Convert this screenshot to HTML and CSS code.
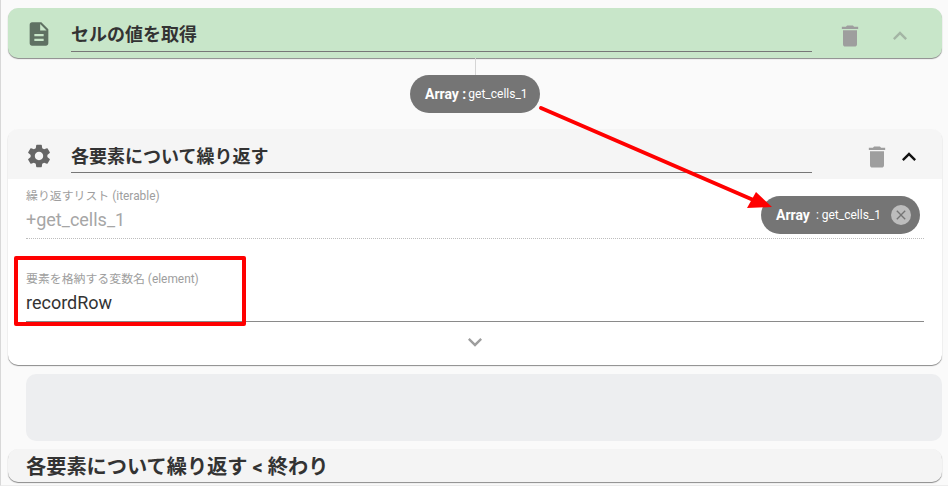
FILE: index.html
```html
<!DOCTYPE html>
<html lang="ja">
<head>
    <meta charset="UTF-8">
    <title>各要素について繰り返す</title>
    <link rel="stylesheet" href="styles.css">
</head>
<body>
    <div class="flow">
        <!-- Get cell value block -->
        <section class="block block-green">
            <div class="block-head">
                <svg class="head-icon" viewBox="0 0 24 24"><path d="M14 2H6c-1.1 0-2 .9-2 2v16c0 1.1.9 2 2 2h12c1.1 0 2-.9 2-2V8l-6-6zm2 16H8v-2h8v2zm0-4H8v-2h8v2zm-3-5V3.5L18.5 9H13z"/></svg>
                <div class="head-title">セルの値を取得</div>
                <svg class="trash" viewBox="0 0 24 24"><path d="M6 19c0 1.1.9 2 2 2h8c1.100 0 2-.9 2-2V7H6v12zM19 4h-3.500l-1-1h-5l-1 1H5v2h14V4z"/></svg>
                <svg class="chevron faded" viewBox="0 0 24 24"><path d="M7.410 15.410 12 10.830l4.590 4.580L18 14l-6-6-6 6z"/></svg>
            </div>
        </section>

        <!-- Output variable chip -->
        <div class="connector">
            <div class="chip chip-out"><b>Array :</b><span>get_cells_1</span></div>
        </div>

        <!-- For each block -->
        <section class="block block-loop">
            <div class="block-head">
                <svg class="head-icon" viewBox="0 0 24 24"><path d="M19.140 12.940c.04-.3.06-.61.06-.94 0-.32-.02-.64-.07-.94l2.030-1.580c.18-.14.23-.41.12-.61l-1.920-3.320c-.12-.22-.37-.29-.59-.22l-2.390.96c-.5-.38-1.030-.7-1.620-.94l-.36-2.540c-.04-.24-.24-.41-.48-.41h-3.840c-.24 0-.43.17-.47.41l-.36 2.540c-.59.24-1.130.57-1.620.94l-2.390-.96c-.22-.08-.47 0-.59.22L2.740 8.870c-.12.21-.08.47.12.61l2.030 1.580c-.05.3-.09.63-.09.94s.02.64.07.94l-2.030 1.580c-.18.14-.23.41-.12.61l1.920 3.320c.12.22.37.29.59.22l2.390-.96c.5.38 1.030.7 1.620.94l.36 2.540c.05.24.24.41.48.41h3.840c.24 0 .44-.17.47-.41l.36-2.540c.59-.24 1.130-.56 1.620-.94l2.390.96c.22.08.47 0 .59-.22l1.920-3.320c.12-.22.07-.47-.12-.61l-2.010-1.580zM12 15.600c-1.980 0-3.600-1.620-3.600-3.600s1.620-3.600 3.600-3.600 3.600 1.620 3.600 3.600-1.620 3.600-3.600 3.600z"/></svg>
                <div class="head-title">各要素について繰り返す</div>
                <svg class="trash" viewBox="0 0 24 24"><path d="M6 19c0 1.100.9 2 2 2h8c1.100 0 2-.9 2-2V7H6v12zM19 4h-3.500l-1-1h-5l-1 1H5v2h14V4z"/></svg>
                <svg class="chevron" viewBox="0 0 24 24"><path d="M7.410 15.410 12 10.830l4.590 4.580L18 14l-6-6-6 6z"/></svg>
            </div>
            <div class="block-body">
                <div class="field field-dashed">
                    <label>繰り返すリスト (iterable)</label>
                    <div class="field-value muted">+get_cells_1</div>
                    <div class="chip chip-in">
                        <b>Array</b><span>: get_cells_1</span>
                        <i class="chip-close"><svg viewBox="0 0 24 24"><path d="M19 6.410 17.590 5 12 10.590 6.410 5 5 6.410 10.590 12 5 17.590 6.410 19 12 13.410 17.590 19 19 17.590 13.410 12z"/></svg></i>
                    </div>
                </div>
                <div class="field field-solid">
                    <label>要素を格納する変数名 (element)</label>
                    <div class="field-value">recordRow</div>
                </div>
                <div class="expand">
                    <svg viewBox="0 0 24 24"><path d="M7.410 8.590 12 13.170l4.590-4.580L18 10l-6 6-6-6z"/></svg>
                </div>
            </div>
        </section>

        <div class="drop-area"></div>

        <section class="block block-end">各要素について繰り返す &lt; 終わり</section>
    </div>

    <!-- Annotations drawn over the screenshot -->
    <div class="mark-box"></div>
    <svg class="mark-arrow" viewBox="0 0 948 486">
        <line x1="541" y1="108" x2="758" y2="202" stroke="#ff0000" stroke-width="4" stroke-linecap="round"/>
        <polygon points="756,192 772,207 747,208" fill="#ff0000"/>
    </svg>
</body>
</html>
```

FILE: styles.css
```css
html, body {
    margin: 0;
    padding: 0;
    height: 100%;
    overflow: hidden;
}

body {
    background: #fafafa;
    color: #333;
    font-family: Roboto, "Noto Sans CJK JP", sans-serif;
    border-left: 1px solid #d8d8d8;
    border-bottom: 1px solid #ececec;
    box-sizing: border-box;
}

.flow {
    display: flex;
    flex-direction: column;
    padding: 8px 6px 0 7px;
}

/* Blocks */
.block {
    border-radius: 10px;
    box-shadow: 0 1px 1px rgba(0, 0, 0, 0.45);
}

.block-head {
    display: flex;
    align-items: center;
    height: 50px;
    box-sizing: border-box;
    padding: 5px 0 0 17px;
}

.block-green {
    background: #c8e6c9;
}

.block-green .block-head {
    padding-right: 28px;
}

.block-loop {
    background: #fff;
}

.block-loop .block-head {
    padding-right: 19px;
    background: #f5f5f5;
    border-radius: 10px 10px 0 0;
}

.head-icon {
    width: 28px;
    height: 28px;
    margin-top: -4px;
    fill: #5f7163;
    flex: none;
}

.block-loop .head-icon {
    margin-top: -2px;
    fill: #666;
}

.head-title {
    flex: 1;
    align-self: flex-start;
    margin-left: 18px;
    height: 39px;
    box-sizing: border-box;
    line-height: 44px;
    font-size: 18px;
    font-weight: 700;
    color: #333;
    border-bottom: 1px solid #777;
}

.block-loop .head-title {
    line-height: 46px;
}

.trash {
    width: 28px;
    height: 28px;
    margin-left: 24px;
    fill: #9e9e9e;
    flex: none;
}

.block-loop .trash {
    margin-left: 51px;
}

.chevron {
    width: 28px;
    height: 28px;
    margin-left: 22px;
    fill: #111;
    flex: none;
}

.block-loop .chevron {
    margin-left: 4px;
}

.chevron.faded {
    fill: #a3b5a4;
}

/* Chips */
.connector {
    display: flex;
    justify-content: center;
    height: 71px;
    padding-top: 17px;
    box-sizing: border-box;
    position: relative;
}

.connector::before {
    content: "";
    position: absolute;
    top: 0;
    left: 467px;
    width: 1px;
    height: 17px;
    background: #d5d5d5;
}

.chip {
    display: flex;
    align-items: center;
    height: 38px;
    box-sizing: border-box;
    border-radius: 19px;
    background: #757575;
    color: #fff;
}

.chip b {
    font-size: 14px;
}

.chip span {
    font-size: 12px;
}

.chip-out {
    width: 130px;
    padding-left: 15px;
}

.chip-out b {
    margin-right: 2px;
}

.chip-in {
    position: absolute;
    top: 17px;
    right: 4px;
    width: 159px;
    padding-left: 15px;
}

.chip-in span {
    margin-left: 6px;
}

.chip-close {
    display: flex;
    align-items: center;
    justify-content: center;
    width: 20px;
    height: 20px;
    margin-left: 10px;
    border-radius: 50%;
    background: #bdbdbd;
}

.chip-close svg {
    width: 16px;
    height: 16px;
    fill: #757575;
}

/* Form fields */
.block-body {
    padding: 0 18px;
    border-radius: 0 0 10px 10px;
}

.field {
    position: relative;
    box-sizing: border-box;
}

.field label {
    display: block;
    font-size: 11.900px;
    line-height: 16px;
    color: #9e9e9e;
}

.field-value {
    font-size: 18px;
    line-height: 24px;
    color: #333;
    margin-top: 4px;
}

.field-value.muted {
    color: #a6a6a6;
}

.field-dashed {
    height: 60px;
    padding-top: 9px;
    border-bottom: 1px dotted #bdbdbd;
}

.field-solid {
    height: 83px;
    padding-top: 32px;
    border-bottom: 1px solid #8a8a8a;
}

.expand {
    display: flex;
    justify-content: center;
    height: 43px;
    padding-top: 6px;
    box-sizing: border-box;
}

.expand svg {
    width: 28px;
    height: 28px;
    fill: #9e9e9e;
}

/* Lower area */
.drop-area {
    height: 67px;
    margin: 9px 0 8px 18px;
    border-radius: 10px;
    background: #edeef0;
}

.block-end {
    height: 33px;
    padding-left: 18px;
    box-sizing: border-box;
    background: #f4f4f4;
    font-size: 20.200px;
    font-weight: 700;
    line-height: 37px;
    color: #333;
    overflow: hidden;
}

/* Annotations */
.mark-box {
    position: absolute;
    left: 14px;
    top: 256px;
    width: 232px;
    height: 70px;
    box-sizing: border-box;
    border: 4px solid #ff0000;
    border-radius: 2px;
}

.mark-arrow {
    position: absolute;
    left: 0;
    top: 0;
    width: 948px;
    height: 486px;
}
```
